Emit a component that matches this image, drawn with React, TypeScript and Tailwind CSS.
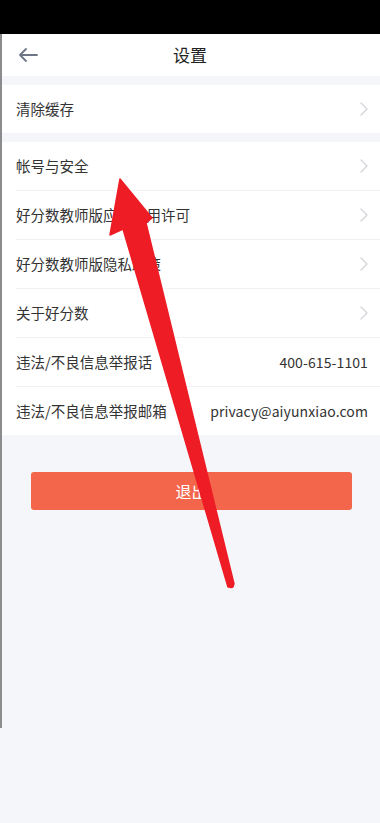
import React from 'react';

const font = { fontFamily: '"Noto Sans CJK SC", "Noto Sans", sans-serif' };

function Chevron() {
  return (
    <svg width="8" height="14" viewBox="0 0 8 14" className="shrink-0">
      <path d="M1 1 L7 7 L1 13" fill="none" stroke="#d2d4d8" strokeWidth="1.3" strokeLinecap="round" strokeLinejoin="round" />
    </svg>
  );
}

function Row({ label, value, last }: { label: string; value?: string; last?: boolean }) {
  return (
    <div className="pl-[14px]">
      <div className={`flex items-center justify-between pr-[12px] ${last ? 'h-[48px]' : 'h-[49px] border-b border-[#f1f1f3]'}`}>
        <span className="text-[14.5px] text-[#333]">{label}</span>
        {value ? <span className="text-[14px] text-[#333] tracking-[0.1px]">{value}</span> : <Chevron />}
      </div>
    </div>
  );
}

export default function App() {
  const rows = [
    { label: '帐号与安全' },
    { label: '好分数教师版应用使用许可' },
    { label: '好分数教师版隐私政策' },
    { label: '关于好分数' },
    { label: '违法/不良信息举报话', value: '400-615-1101' },
    { label: '违法/不良信息举报邮箱', value: 'privacy@aiyunxiao.com' },
  ];

  return (
    <div className="relative w-[380px] min-h-[823px] bg-[#f5f6fa] overflow-hidden" style={font}>
      <div className="h-[34px] bg-black" />
      <div className="h-[694px] border-l-2 border-[#8c8c8c] flex flex-col">
        <div className="h-[42px] bg-white flex items-center relative">
          <svg width="20" height="16" viewBox="0 0 20 16" className="ml-[16px]">
            <path d="M19 8 H2 M8 2 L2 8 L8 14" fill="none" stroke="#6e7586" strokeWidth="1.8" strokeLinecap="round" strokeLinejoin="round" />
          </svg>
          <span className="absolute left-0 right-0 text-center text-[17px] text-[#222] pointer-events-none pr-[2px]">设置</span>
        </div>
        <div className="h-[9px]" />
        <div className="bg-white">
          <Row label="清除缓存" last />
        </div>
        <div className="h-[9px]" />
        <div className="bg-white">
          {rows.map((r, i) => (
            <Row key={r.label} label={r.label} value={r.value} last={i === rows.length - 1} />
          ))}
        </div>
        <div className="px-[29px] pt-[37px]">
          <div className="h-[38px] w-[321px] rounded-[3px] bg-[#f4664c] flex items-center justify-center text-white text-[16px]">
            退出
          </div>
        </div>
      </div>

      <svg className="absolute inset-0 pointer-events-none" width="380" height="823" viewBox="0 0 380 823">
        <polygon
          points="120,179 152,218 146,223 234,584 228,587 123,229 110,235"
          fill="#ee1c25"
          stroke="#ee1c25"
          strokeWidth="1.5"
          strokeLinejoin="round"
        />
        <circle cx="231" cy="585" r="3.2" fill="#ee1c25" />
      </svg>
    </div>
  );
}
